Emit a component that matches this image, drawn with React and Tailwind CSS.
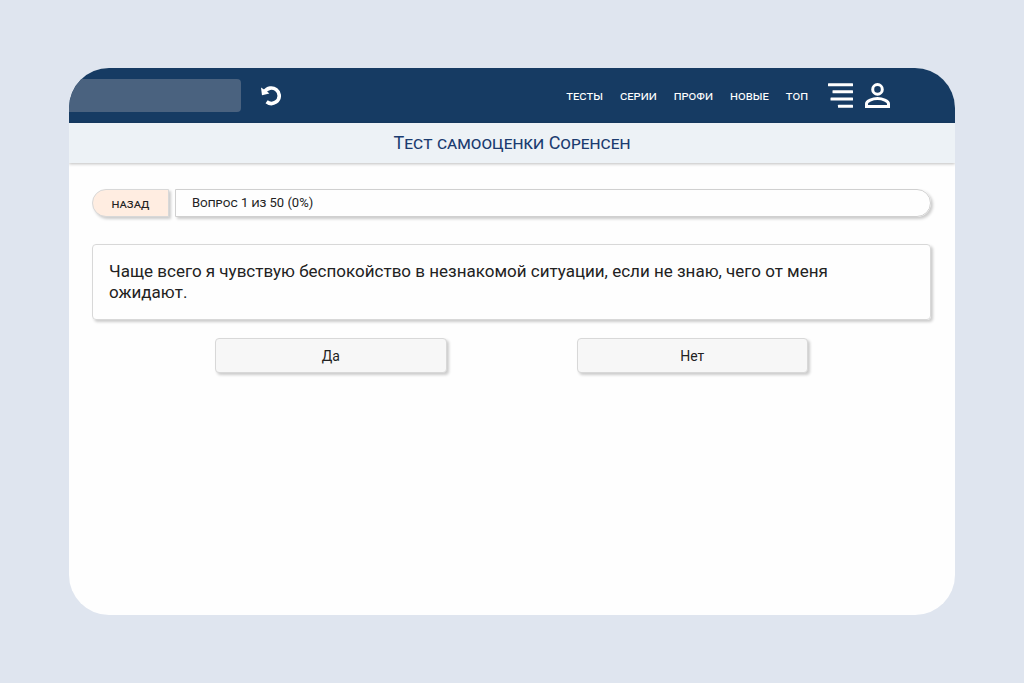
const links = ["тесты", "серии", "профи", "новые", "топ"];

function UndoIcon() {
  return (
    <svg className="w-5 h-5" viewBox="0 0 20 20" fill="none" aria-hidden="true">
      <path
        d="M3.6 5.6 C6.2 1.6 11.6 0.9 15.2 3.7 C19.4 7 19.2 13.2 14.9 16.1 C12 18 8.4 17.9 5.6 15.8"
        stroke="currentColor"
        strokeWidth="3.6"
      />
      <path d="M0 1.6 L1 9.2 L8.4 7.6 L6 5.4 Z" fill="currentColor" />
    </svg>
  );
}

function MenuIcon() {
  return (
    <svg className="w-[25px] h-[26px]" viewBox="0 0 25 26" fill="currentColor" aria-hidden="true">
      <rect x="0" y="0.2" width="25" height="3" rx="0.5" />
      <rect x="4.5" y="7.2" width="20.5" height="3" rx="0.5" />
      <rect x="2.5" y="14.4" width="22.5" height="3" rx="0.5" />
      <rect x="10" y="21.8" width="15" height="3" rx="0.5" />
    </svg>
  );
}

function UserIcon() {
  return (
    <svg
      className="w-[25px] h-[26px]"
      viewBox="0 0 25 26"
      fill="none"
      stroke="currentColor"
      strokeWidth="3"
      aria-hidden="true"
    >
      <circle cx="12.5" cy="6.4" r="4.8" />
      <path d="M1.5 23.4 V20.8 C1.5 17.8 7.6 15.6 12.5 15.6 C17.4 15.6 23.5 17.8 23.5 20.8 V23.4 Z" />
    </svg>
  );
}

function Header() {
  return (
    <header className="flex items-center h-[55px] bg-[#163b63] text-white pr-[65px]">
      <input
        className="w-[172px] h-[33px] rounded-r bg-[#4a627f] px-3 text-sm focus:outline-none"
        type="text"
        aria-label="Поиск"
      />
      <button className="ml-5" type="button" aria-label="Обновить">
        <UndoIcon />
      </button>
      <nav className="flex items-center gap-[17px] ml-auto text-[13px] [font-variant-caps:small-caps]">
        {links.map((link) => (
          <a key={link} href="#">
            {link}
          </a>
        ))}
      </nav>
      <button className="ml-5" type="button" aria-label="Меню">
        <MenuIcon />
      </button>
      <button className="ml-3" type="button" aria-label="Профиль">
        <UserIcon />
      </button>
    </header>
  );
}

function Answer({ children }) {
  return (
    <button
      className="flex-1 h-[35px] rounded border border-[#d8d8d8] bg-[#f7f7f7] text-sm shadow-[2px_2px_3px_rgba(0,0,0,0.2)]"
      type="button"
    >
      {children}
    </button>
  );
}

export default function App() {
  return (
    <div className="flex min-h-screen px-[69px] py-[68px] bg-[#dfe5ef] font-[Roboto,sans-serif] text-[#222222]">
      <div className="flex-1 rounded-[40px] overflow-hidden bg-[#fefefe]">
        <Header />
        <h1 className="h-10 text-center text-lg leading-10 text-[#1b3c70] bg-[#edf2f6] [font-variant-caps:small-caps] shadow-[0_1px_3px_rgba(0,0,0,0.25)]">
          Тест самооценки Соренсен
        </h1>

        <main className="pl-[23px] pr-6 pt-[26px]">
          <div className="flex gap-[6px] [font-variant-caps:small-caps]">
            <button
              className="w-[77px] h-7 rounded-l-full border border-[#d8d8d8] bg-[#ffede1] text-[13px] leading-none shadow-[2px_2px_3px_rgba(0,0,0,0.2)]"
              type="button"
            >
              назад
            </button>
            <div className="flex-1 h-7 rounded-r-full border border-[#d0d0d0] px-4 text-[13px] leading-[26px] shadow-[2px_2px_3px_rgba(0,0,0,0.2)]">
              Вопрос 1 из 50 (0%)
            </div>
          </div>

          <p className="mt-[27px] py-4 pl-4 pr-8 rounded border border-[#d8d8d8] text-[17px] leading-[21px] shadow-[2px_2px_3px_rgba(0,0,0,0.2)]">
            Чаще всего я чувствую беспокойство в незнакомой ситуации, если не
            знаю, чего от меня ожидают.
          </p>

          <div className="flex gap-[130px] mt-[18px] px-[123px]">
            <Answer>Да</Answer>
            <Answer>Нет</Answer>
          </div>
        </main>
      </div>
    </div>
  );
}
